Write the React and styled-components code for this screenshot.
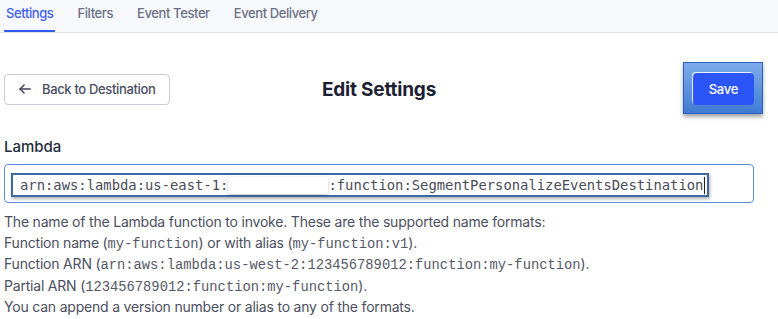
import React from "react";
import styled, { createGlobalStyle } from "styled-components";

const Global = createGlobalStyle`
  html, body { margin: 0; padding: 0; background: #ffffff; }
  body { font-family: Inter, "Noto Sans", "Liberation Sans", sans-serif; -webkit-font-smoothing: antialiased; }
  * { box-sizing: border-box; }
`;

const Page = styled.div`
  width: 778px;
  height: 319px;
  overflow: hidden;
`;

const TabBar = styled.nav`
  display: flex;
  gap: 20px;
  height: 33px;
  padding-left: 4px;
  background: #f8f9fc;
  border-bottom: 1px solid #e3e5ec;
`;

const Tab = styled.div`
  height: 32px;
  padding: 5px 2px 0;
  font-size: 13px;
  line-height: 16px;
  font-weight: 500;
  letter-spacing: -0.4px;
  color: ${(p) => (p.$active ? "#3d5ef2" : "#6c7086")};
  border-bottom: 2px solid ${(p) => (p.$active ? "#2f5bf5" : "transparent")};
  border-radius: 0 0 1px 1px;
`;

const Content = styled.div`
  width: 750px;
  margin-left: 4px;
`;

const Header = styled.div`
  display: grid;
  grid-template-columns: 1fr auto 1fr;
  align-items: center;
  margin-top: 40px;
`;

const BackButton = styled.button`
  justify-self: start;
  display: flex;
  align-items: center;
  gap: 10px;
  height: 31px;
  width: 166px;
  padding: 0 0 0 13px;
  background: #ffffff;
  border: 1px solid #c9cbd6;
  border-radius: 4px;
  font-family: inherit;
  font-size: 13px;
  font-weight: 500;
  letter-spacing: -0.35px;
  color: #4b4e64;
`;

const Title = styled.h1`
  margin: 0;
  font-size: 19px;
  font-weight: 700;
  color: #1c1e33;
  letter-spacing: -0.2px;
`;

const SaveWrap = styled.div`
  justify-self: end;
  position: relative;
  &::before {
    content: "";
    position: absolute;
    left: -10px;
    right: -9px;
    top: -11px;
    bottom: -9px;
    border: 1px solid #2b62bd;
    background: linear-gradient(#7eaced, #3f7bd3);
    box-shadow: 0 3px 4px rgba(0, 0, 0, 0.35);
  }
`;

const SaveButton = styled.button`
  position: relative;
  width: 61px;
  height: 32px;
  border: none;
  border-radius: 4px;
  background: #2b55f6;
  box-shadow: -1px -1px 0 #e9eff9;
  color: #ffffff;
  font-family: inherit;
  font-size: 13px;
  font-weight: 500;
  letter-spacing: -0.2px;
`;

const Label = styled.div`
  margin-top: 32px;
  font-size: 15px;
  line-height: 20px;
  font-weight: 500;
  color: #1f2d3d;
`;

const InputBox = styled.div`
  margin-top: 7px;
  height: 39px;
  padding: 8px 0 0 6px;
  border: 1px solid #5a8ed6;
  border-radius: 4px;
`;

const Highlight = styled.div`
  display: inline-flex;
  align-items: center;
  height: 24px;
  padding: 0 2px 0 7px;
  border: 2px solid #3c68a6;
  background: #ffffff;
  box-shadow: 1px 2px 3px rgba(0, 0, 0, 0.3);
  font-family: "DejaVu Sans Mono", "Liberation Mono", monospace;
  font-size: 13.85px;
  color: #4a4c58;
  white-space: nowrap;
`;

const Redacted = styled.span`
  display: inline-block;
  width: 12ch;
  height: 17px;
  background: #ffffff;
  box-shadow: 0 1px 3px rgba(0, 0, 0, 0.25);
  border-radius: 2px;
`;

const Caret = styled.span`
  display: inline-block;
  width: 1px;
  height: 17px;
  margin-left: 1px;
  background: #222;
`;

const Help = styled.div`
  margin-top: 8px;
  font-size: 14px;
  line-height: 21.2px;
  letter-spacing: -0.2px;
  color: #4c4f60;
`;

const HelpLine = styled.div`
  height: 21.2px;
  white-space: nowrap;
`;

const Code = styled.code`
  font-family: "Liberation Mono", "Courier New", monospace;
  font-size: 13.8px;
  line-height: 1;
  letter-spacing: 0;
  color: #565968;
`;

const ArrowLeft = () => (
  <svg width="14" height="14" viewBox="0 0 24 24" fill="none" stroke="#3f4257" strokeWidth="2.4" strokeLinecap="round" strokeLinejoin="round">
    <path d="M21 12H3.5" />
    <path d="M10.5 5l-7 7 7 7" />
  </svg>
);

export default function App() {
  return (
    <Page>
      <Global />
      <TabBar>
        <Tab $active>Settings</Tab>
        <Tab>Filters</Tab>
        <Tab>Event Tester</Tab>
        <Tab>Event Delivery</Tab>
      </TabBar>
      <Content>
        <Header>
          <BackButton>
            <ArrowLeft />
            Back to Destination
          </BackButton>
          <Title>Edit Settings</Title>
          <SaveWrap>
            <SaveButton>Save</SaveButton>
          </SaveWrap>
        </Header>
        <Label>Lambda</Label>
        <InputBox>
          <Highlight>
            arn:aws:lambda:us-east-1:
            <Redacted />
            :function:SegmentPersonalizeEventsDestination
            <Caret />
          </Highlight>
        </InputBox>
        <Help>
          <HelpLine>The name of the Lambda function to invoke. These are the supported name formats:</HelpLine>
          <HelpLine>
            Function name (<Code>my-function</Code>) or with alias (<Code>my-function:v1</Code>).
          </HelpLine>
          <HelpLine>
            Function ARN (<Code>arn:aws:lambda:us-west-2:123456789012:function:my-function</Code>).
          </HelpLine>
          <HelpLine>
            Partial ARN (<Code>123456789012:function:my-function</Code>).
          </HelpLine>
          <HelpLine>You can append a version number or alias to any of the formats.</HelpLine>
        </Help>
      </Content>
    </Page>
  );
}
